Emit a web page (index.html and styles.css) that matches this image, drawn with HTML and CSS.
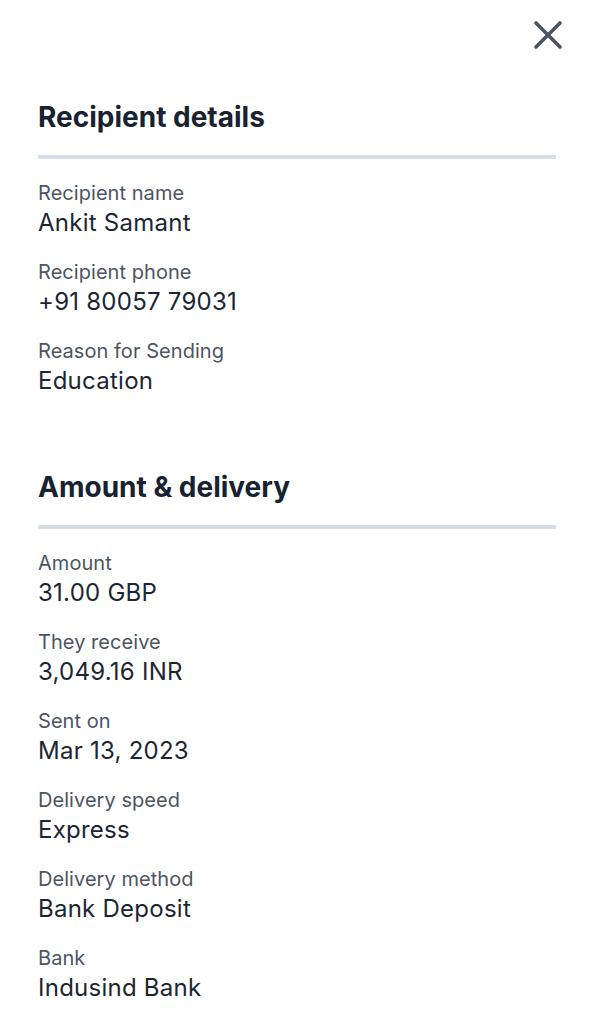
FILE: index.html
```html
<!DOCTYPE html>
<html lang="en">
<head>
<meta charset="utf-8">
<title>Transfer details</title>
<link rel="stylesheet" href="styles.css">
</head>
<body>
<div class="sheet">
  <div class="topbar">
    <button class="close" aria-label="Close">
      <svg width="32" height="32" viewBox="0 0 32 32" fill="none">
        <path d="M4 4 L28 28 M28 4 L4 28" stroke="#4a5462" stroke-width="3.6" stroke-linecap="round"/>
      </svg>
    </button>
  </div>

  <section class="section">
    <h2 class="section-title">Recipient details</h2>
    <div class="divider"></div>
    <div class="items">
      <div class="item"><div class="label">Recipient name</div><div class="value">Ankit Samant</div></div>
      <div class="item"><div class="label">Recipient phone</div><div class="value">+91 80057 79031</div></div>
      <div class="item"><div class="label">Reason for Sending</div><div class="value">Education</div></div>
    </div>
  </section>

  <section class="section">
    <h2 class="section-title">Amount &amp; delivery</h2>
    <div class="divider"></div>
    <div class="items">
      <div class="item"><div class="label">Amount</div><div class="value">31.00 GBP</div></div>
      <div class="item"><div class="label">They receive</div><div class="value">3,049.16 INR</div></div>
      <div class="item"><div class="label">Sent on</div><div class="value">Mar 13, 2023</div></div>
      <div class="item"><div class="label">Delivery speed</div><div class="value">Express</div></div>
      <div class="item"><div class="label">Delivery method</div><div class="value">Bank Deposit</div></div>
      <div class="item"><div class="label">Bank</div><div class="value">Indusind Bank</div></div>
    </div>
  </section>
</div>
</body>
</html>
```

FILE: styles.css
```css
html, body {
  margin: 0;
  padding: 0;
  background: #ffffff;
}

body {
  font-family: Inter, "Noto Sans", "Liberation Sans", sans-serif;
  color: #1c2633;
}

.sheet {
  width: 594px;
  display: flex;
  flex-direction: column;
}

.topbar {
  display: flex;
  justify-content: flex-end;
  padding: 19px 30px 0 0;
}

.close {
  border: 0;
  background: none;
  padding: 0;
  margin: 0;
  width: 32px;
  height: 32px;
  display: block;
  cursor: pointer;
}

.close svg {
  display: block;
}

.section {
  padding: 0 38px;
  display: flex;
  flex-direction: column;
}

.section:first-of-type {
  margin-top: 49px;
}

.section + .section {
  margin-top: 73px;
}

.section-title {
  margin: 0;
  font-size: 28px;
  line-height: 34px;
  font-weight: 700;
  color: #182230;
  letter-spacing: 0;
}

.divider {
  height: 4px;
  background: #d7dde6;
  margin-top: 21px;
  border-radius: 1px;
}

.items {
  margin-top: 22px;
  display: flex;
  flex-direction: column;
  gap: 21px;
}

.label {
  font-size: 20px;
  line-height: 24px;
  color: #4b5563;
  letter-spacing: 0.05px;
}

.value {
  margin-top: 2px;
  font-size: 24px;
  line-height: 32px;
  color: #1c2633;
  letter-spacing: 0.25px;
}
```
